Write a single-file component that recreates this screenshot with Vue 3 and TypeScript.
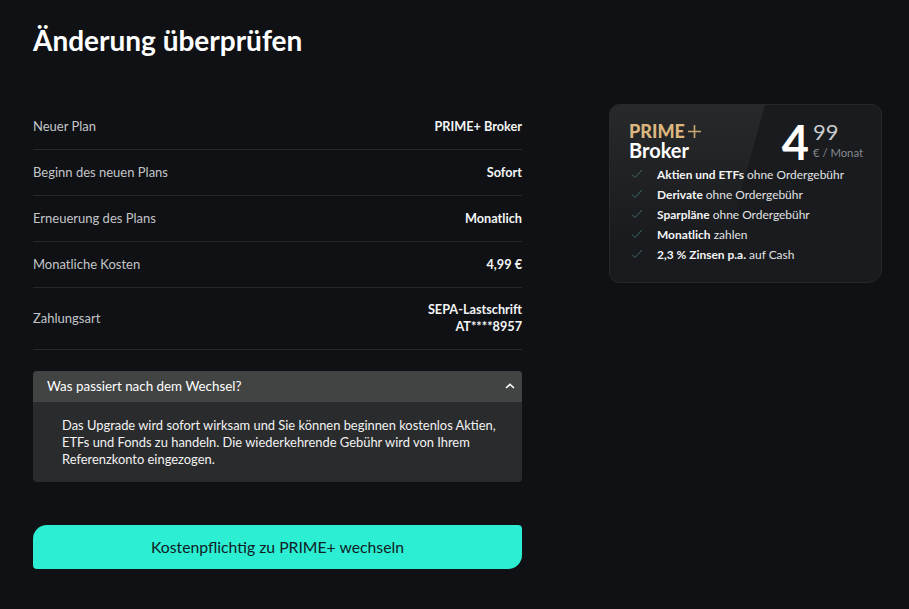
<script setup lang="ts">
const rows: { label: string; value: string[] }[] = [
  { label: 'Neuer Plan', value: ['PRIME+ Broker'] },
  { label: 'Beginn des neuen Plans', value: ['Sofort'] },
  { label: 'Erneuerung des Plans', value: ['Monatlich'] },
  { label: 'Monatliche Kosten', value: ['4,99 €'] },
  { label: 'Zahlungsart', value: ['SEPA-Lastschrift', 'AT****8957'] },
]
const features: { bold: string; rest: string }[] = [
  { bold: 'Aktien und ETFs', rest: ' ohne Ordergebühr' },
  { bold: 'Derivate', rest: ' ohne Ordergebühr' },
  { bold: 'Sparpläne', rest: ' ohne Ordergebühr' },
  { bold: 'Monatlich', rest: ' zahlen' },
  { bold: '2,3 % Zinsen p.a.', rest: ' auf Cash' },
]
</script>

<template>
  <div class="page">
    <h1 class="title">Änderung überprüfen</h1>
    <div class="columns">
      <main class="main">
        <div v-for="r in rows" :key="r.label" class="row">
          <span class="label">{{ r.label }}</span>
          <span class="value"><span v-for="v in r.value" :key="v" class="line">{{ v }}</span></span>
        </div>
        <section class="acc">
          <header class="acc-head">
            <span>Was passiert nach dem Wechsel?</span>
            <svg width="10" height="6" viewBox="0 0 10 6" fill="none"><path d="M1 5l4-3.600L9 5" stroke="#fff" stroke-width="1.600" /></svg>
          </header>
          <p class="acc-body">Das Upgrade wird sofort wirksam und Sie können beginnen kostenlos Aktien, ETFs und Fonds zu handeln. Die wiederkehrende Gebühr wird von Ihrem Referenzkonto eingezogen.</p>
        </section>
        <button class="cta"><span class="cta-text">Kostenpflichtig zu PRIME+ wechseln</span></button>
      </main>
      <aside class="card">
        <div class="card-top">
          <div class="brand">
            <div class="prime">PRIME<svg class="plus" width="13" height="13" viewBox="0 0 13 13"><path d="M6.500 0v13M0 6.500h13" stroke="#c9a671" stroke-width="1.600" /></svg></div>
            <div class="broker">Broker</div>
          </div>
          <div class="price">
            <span class="int">4</span>
            <span class="dec"><span class="cents">99</span><span class="per">€ / Monat</span></span>
          </div>
        </div>
        <ul class="list">
          <li v-for="f in features" :key="f.bold" class="item">
            <svg width="12" height="10" viewBox="0 0 12 10" fill="none"><path d="M1 5.500l3 3L11 1" stroke="#3f6a68" stroke-width="1" /></svg>
            <span><b>{{ f.bold }}</b>{{ f.rest }}</span>
          </li>
        </ul>
      </aside>
    </div>
  </div>
</template>

<style>
html, body { margin: 0; background: #0f1114; }
</style>

<style scoped>
.page {
  width: 909px;
  height: 609px;
  box-sizing: border-box;
  padding: 23px 27px 0 33px;
  background: #0f1114;
  color: #fff;
  font-family: Lato, "Noto Sans", sans-serif;
  overflow: hidden;
}
.title {
  margin: 0 0 47px;
  font-size: 28px;
  line-height: 34px;
  font-weight: 700;
}
.columns { display: flex; justify-content: space-between; align-items: flex-start; }
.main { width: 489px; display: flex; flex-direction: column; }
.row {
  display: flex;
  justify-content: space-between;
  align-items: center;
  box-sizing: border-box;
  min-height: 46px;
  border-bottom: 1px solid #26282b;
  font-size: 13px;
  line-height: 17px;
}
.row:last-of-type { min-height: 62px; padding-bottom: 1px; }
.label { color: #c3c5c9; }
.value { font-size: 12.700px; font-weight: 700; text-align: right; color: #f4f5f6; }
.line { display: block; }
.acc { margin-top: 21px; border-radius: 4px; overflow: hidden; background: #2a2b2d; }
.acc-head {
  box-sizing: border-box;
  height: 31px;
  padding: 0 7px 2px 14px;
  display: flex;
  justify-content: space-between;
  align-items: center;
  background: #424443;
  font-size: 13.400px;
}
.acc-body {
  margin: 0;
  padding: 15px 20px 0 29px;
  height: 80px;
  box-sizing: border-box;
  font-size: 12.900px;
  line-height: 17px;
  color: #f2f2f2;
}
.cta {
  margin-top: 43px;
  height: 44px;
  padding: 0 0 2px;
  border: 0;
  border-radius: 14px 4px 14px 4px;
  background: #2ceed3;
  color: #10201f;
  font: inherit;
  font-size: 15.750px;
}
.card {
  position: relative;
  width: 273px;
  height: 179px;
  box-sizing: border-box;
  padding: 17px 18px 17px 19px;
  border: 1px solid #26282b;
  border-radius: 10px 10px 14px 10px;
  background: #191b1e;
  overflow: hidden;
}
.card::before {
  content: "";
  position: absolute;
  inset: 0;
  background: linear-gradient(180deg, #28292b 0%, #191b1e 75%);
  clip-path: polygon(0 0, 155px 0, 105px 179px, 0 179px);
}
.card-top, .list { position: relative; }
.card-top { display: flex; justify-content: space-between; height: 42px; }
.prime {
  display: flex;
  align-items: center;
  gap: 3px;
  font-size: 18px;
  line-height: 19px;
  font-weight: 900;
  color: #dcb67f;
}
.broker { font-size: 20px; line-height: 19px; font-weight: 700; }
.price { display: flex; gap: 4px; }
.int { font-size: 47px; line-height: 40px; font-weight: 700; }
.dec { display: flex; flex-direction: column; align-items: flex-start; margin-top: -3px; }
.cents { font-size: 22px; line-height: 26px; color: #c7c9cc; }
.per { font-size: 11.300px; line-height: 16px; color: #878a90; }
.list { list-style: none; margin: 0; padding: 0; }
.item {
  height: 20px;
  display: flex;
  align-items: center;
  gap: 14px;
  padding-left: 2px;
  font-size: 11.950px;
  color: #e2e3e5;
}
.item b { font-weight: 700; color: #f4f5f6; }
</style>
